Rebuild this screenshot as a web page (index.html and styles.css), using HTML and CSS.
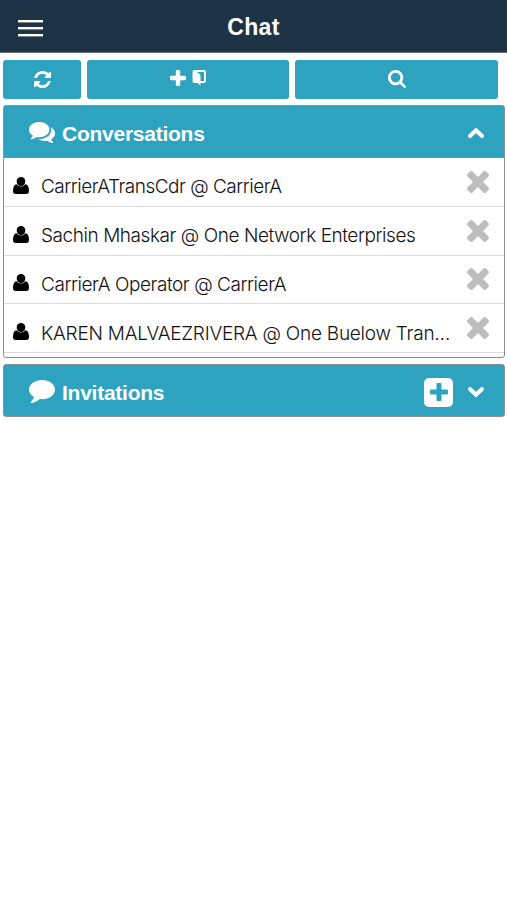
FILE: index.html
```
<!DOCTYPE html>
<html lang="en">

<head>
    <meta charset="utf-8">
    <title>Chat</title>
    <link rel="stylesheet" href="styles.css">
</head>

<body>
    <svg class="defs">
        <symbol id="user" viewBox="0 0 16 17"><path d="M8 0a4.300 4.300 0 0 1 4.300 4.500A4.300 4.300 0 0 1 8 9a4.300 4.300 0 0 1-4.300-4.500A4.300 4.300 0 0 1 8 0zM3.600 7.200Q5.500 9.400 8 9.400t4.400-2.200Q16 7.600 16 14q0 3-2.800 3H2.800Q0 17 0 14q0-6.400 3.600-6.800z"/></symbol>
        <symbol id="times" viewBox="302 366 1188 1188"><path d="M1490 1322q0 40-28 68l-136 136q-28 28-68 28t-68-28l-294-294-294 294q-28 28-68 28t-68-28l-136-136q-28-28-28-68t28-68l294-294-294-294q-28-28-28-68t28-68l136-136q28-28 68-28t68 28l294 294 294-294q28-28 68-28t68 28l136 136q28 28 28 68t-28 68l-294 294 294 294q28 28 28 68z"/></symbol>
    </svg>
    <header class="header">
        <div class="menu"><span></span><span></span><span></span></div>
        <h1>Chat</h1>
    </header>
    <div class="toolbar">
        <button class="btn btn-refresh">
            <svg width="17" height="17" viewBox="0 128 1536 1536"><path d="M1511 1056q0 5-1 7-64 268-268 434.500t-478 166.500q-146 0-282.500-55t-243.500-157l-129 129q-19 19-45 19t-45-19-19-45v-448q0-26 19-45t45-19h448q26 0 45 19t19 45-19 45l-137 137q71 66 161 102t187 36q134 0 250-65t186-179q11-17 53-117 8-23 30-23h192q13 0 22.500 9.500t9.500 22.500zm25-800v448q0 26-19 45t-45 19h-448q-26 0-45-19t-19-45 19-45l138-138q-148-137-349-137-134 0-250 65t-186 179q-11 17-53 117-8 23-30 23h-199q-13 0-22.500-9.500t-9.500-22.500v-7q65-268 270-434.500t480-166.500q146 0 284 55.500t245 156.500l130-129q19-19 45-19t45 19 19 45z"/></svg>
        </button>
        <button class="btn btn-new">
            <svg width="16" height="16" viewBox="192 128 1408 1408"><path d="M1600 736v192q0 40-28 68t-68 28h-416v416q0 40-28 68t-68 28h-192q-40 0-68-28t-28-68v-416h-416q-40 0-68-28t-28-68v-192q0-40 28-68t68-28h416v-416q0-40 28-68t68-28h192q40 0 68 28t28 68v416h416q40 0 68 28t28 68z"/></svg>
            <svg width="14" height="16" viewBox="0 0 14 16"><path d="M2 0h10a2 2 0 0 1 2 2v9a2 2 0 0 1-2 2H8.500v-2H12V2H5l2.700 2.200q.8.700.8 1.800v9.500L5.500 13H2a2 2 0 0 1-1.500-2V2A2 2 0 0 1 2 0z"/></svg>
        </button>
        <button class="btn btn-search">
            <svg width="18" height="18" viewBox="64 128 1664 1664"><path d="M1216 832q0-185-131.500-316.500t-316.500-131.500-316.500 131.500-131.500 316.500 131.500 316.500 316.500 131.500 316.500-131.500 131.500-316.500zm512 832q0 52-38 90t-90 38q-54 0-90-38l-343-342q-179 124-399 124-143 0-273.500-55.500t-225-150-150-225-55.500-273.500 55.500-273.500 150-225 225-150 273.500-55.500 273.500 55.500 225 150 150 225 55.500 273.500q0 220-124 399l343 343q37 37 37 90z"/></svg>
        </button>
    </div>

    <section class="panel">
        <div class="panel-head">
            <svg class="bubble" width="26" height="21" viewBox="0 256 1792 1408" preserveAspectRatio="none"><path d="M1408 768q0 139-94 257t-256.500 186.500-353.500 68.500q-86 0-176-16-124 88-278 128-36 9-86 16h-3q-11 0-20.500-8t-11.500-21q-1-3-1-6.500t.5-6.500 2-6l2.500-5 3.500-5.500 4-5 4.500-5 4-4.500q5-6 23-25t26-29.500 22.500-29 25-38.500 20.500-44q-124-72-195-177t-71-224q0-139 94-257t256.500-186.500 353.500-68.500 353.500 68.500 256.500 186.500 94 257zm384 256q0 120-71 224.500t-195 176.500q10 24 20.500 44t25 38.500 22.500 29 26 29.500 23 25q1 1 4 4.500t4.500 5 4 5 3.500 5.500l2.500 5 2 6 .5 6.500-1 6.500q-3 14-13 22t-22 7q-50-7-86-16-154-40-278-128-90 16-176 16-271 0-472-132 58 4 88 4 161 0 309-45t264-129q125-92 192-212t67-254q0-77-23-152 129 71 204 178t75 230z"/></svg>
            <h2>Conversations</h2>
            <svg class="chevron" width="18" height="12" viewBox="0 0 18 12"><path d="M3 9L9 3.200 15 9"/></svg>
        </div>
        <ul class="list">
            <li>
                <svg class="user"><use href="#user"/></svg>
                <span class="name n1">CarrierATransCdr @ CarrierA</span>
                <svg class="remove"><use href="#times"/></svg>
            </li>
            <li>
                <svg class="user"><use href="#user"/></svg>
                <span class="name n2">Sachin Mhaskar @ One Network Enterprises</span>
                <svg class="remove"><use href="#times"/></svg>
            </li>
            <li>
                <svg class="user"><use href="#user"/></svg>
                <span class="name n3">CarrierA Operator @ CarrierA</span>
                <svg class="remove"><use href="#times"/></svg>
            </li>
            <li>
                <svg class="user"><use href="#user"/></svg>
                <span class="name n4">KAREN MALVAEZRIVERA @ One Buelow Tran…</span>
                <svg class="remove"><use href="#times"/></svg>
            </li>
        </ul>
    </section>

    <section class="panel">
        <div class="panel-head">
            <svg class="bubble" width="26" height="23" viewBox="0 256 1792 1536" preserveAspectRatio="none"><path d="M1792 896q0 174-120 321.500t-326 233-450 85.500q-70 0-145-8-198 175-460 242-49 14-114 22-17 2-30.500-9t-17.500-29v-1q-3-4-.5-12t2-10 4.500-9.500l6-9 7-8.500 8-9q7-8 31-34.500t34.500-38 31-39.500 32.500-51 27-59 26-76q-157-89-247.500-220t-90.500-281q0-130 71-248.500t191-204.500 286-136.500 348-50.500q244 0 450 85.500t326 233 120 321.500z"/></svg>
            <h2>Invitations</h2>
            <div class="add"><svg width="20" height="20" viewBox="0 0 20 20"><path d="M8.500 1h3a1 1 0 0 1 1 1v5.500H18a1 1 0 0 1 1 1v3a1 1 0 0 1-1 1h-5.500V18a1 1 0 0 1-1 1h-3a1 1 0 0 1-1-1v-5.500H2a1 1 0 0 1-1-1v-3a1 1 0 0 1 1-1h5.500V2a1 1 0 0 1 1-1z"/></svg></div>
            <svg class="chevron" width="18" height="12" viewBox="0 0 18 12"><path d="M3 3L9 8.800 15 3"/></svg>
        </div>
    </section>
</body>

</html>
```
FILE: styles.css
```
* {
    box-sizing: border-box;
}
body {
    margin: 0;
    background: #fff;
    font-family: "Liberation Sans", Arial, sans-serif;
}
svg {
    display: block;
    flex: none;
    fill: currentColor;
}
.defs {
    width: 0;
    height: 0;
    position: absolute;
}
h1, h2 {
    margin: 0;
    font-weight: bold;
}

/* top bar */
.header {
    display: grid;
    grid-template-columns: 60px 1fr 60px;
    align-items: center;
    height: 53px;
    background: #1f3347;
    border-bottom: 1px solid #66727f;
    color: #fff;
}
.header h1 {
    padding-top: 2px;
    font-size: 23px;
    line-height: 26px;
    text-align: center;
    letter-spacing: 0.3px;
}
.menu {
    display: grid;
    gap: 5px;
    width: 25px;
    margin: 4px 0 0 18px;
}
.menu span {
    height: 2px;
    background: #fff;
    box-shadow: 0 1px 0 rgba(255, 255, 255, 0.4);
}

.toolbar {
    display: flex;
    gap: 6px;
    padding: 7px 9px 6px 3px;
}
.btn {
    display: flex;
    align-items: center;
    justify-content: center;
    gap: 6px;
    height: 39px;
    padding: 0 0 1px;
    border: 0;
    border-radius: 3px;
    background: #2da3c0;
    color: #fff;
}
.btn-refresh {
    width: 78px;
}
.btn-new {
    width: 202px;
    padding: 0 1px 3px 0;
}
.btn-search {
    flex: 1;
}

/* collapsible panels */
.panel {
    margin: 0 2px 6px 3px;
    border: 1px solid #8a8f92;
    border-radius: 3px;
}
.panel-head {
    display: flex;
    align-items: center;
    height: 51px;
    padding: 0 19px 0 25px;
    background: #2da3c0;
    color: #fff;
}
.panel-head h2 {
    flex: 1;
    margin: 4px 0 0 7px;
    font-size: 21px;
    line-height: 26px;
    letter-spacing: -0.25px;
}
.bubble {
    margin-top: 2px;
}
.chevron {
    margin-top: 2px;
    fill: none;
    stroke: currentColor;
    stroke-width: 4;
    stroke-linecap: round;
}
.add {
    display: grid;
    place-items: center;
    width: 29px;
    height: 29px;
    margin: 3px 14px 0 0;
    border-radius: 5px;
    background: #fff;
    color: #2da3c0;
}

.list {
    margin: 0;
    padding: 0 0 4px;
    list-style: none;
    border-top: 1px solid #8a8f92;
}
.list li {
    display: flex;
    align-items: center;
    height: 48.750px;
    padding: 0 15px 0 9px;
    border-bottom: 1px solid #dcdcdc;
}
.user {
    width: 16px;
    height: 17px;
    margin-top: 7px;
}
.name {
    flex: 1;
    min-width: 0;
    margin: 11px 12px 0 12px;
    overflow: hidden;
    text-overflow: ellipsis;
    white-space: nowrap;
    font-family: Inter, "Liberation Sans", sans-serif;
    font-size: 19px;
    font-weight: 300;
    line-height: 26px;
    letter-spacing: -0.5px;
    color: #111;
}
.n2, .n3 {
    letter-spacing: -0.440px;
}
.n4 {
    letter-spacing: -0.240px;
}
.remove {
    width: 22px;
    height: 22px;
    color: #bdbdbd;
}
```
